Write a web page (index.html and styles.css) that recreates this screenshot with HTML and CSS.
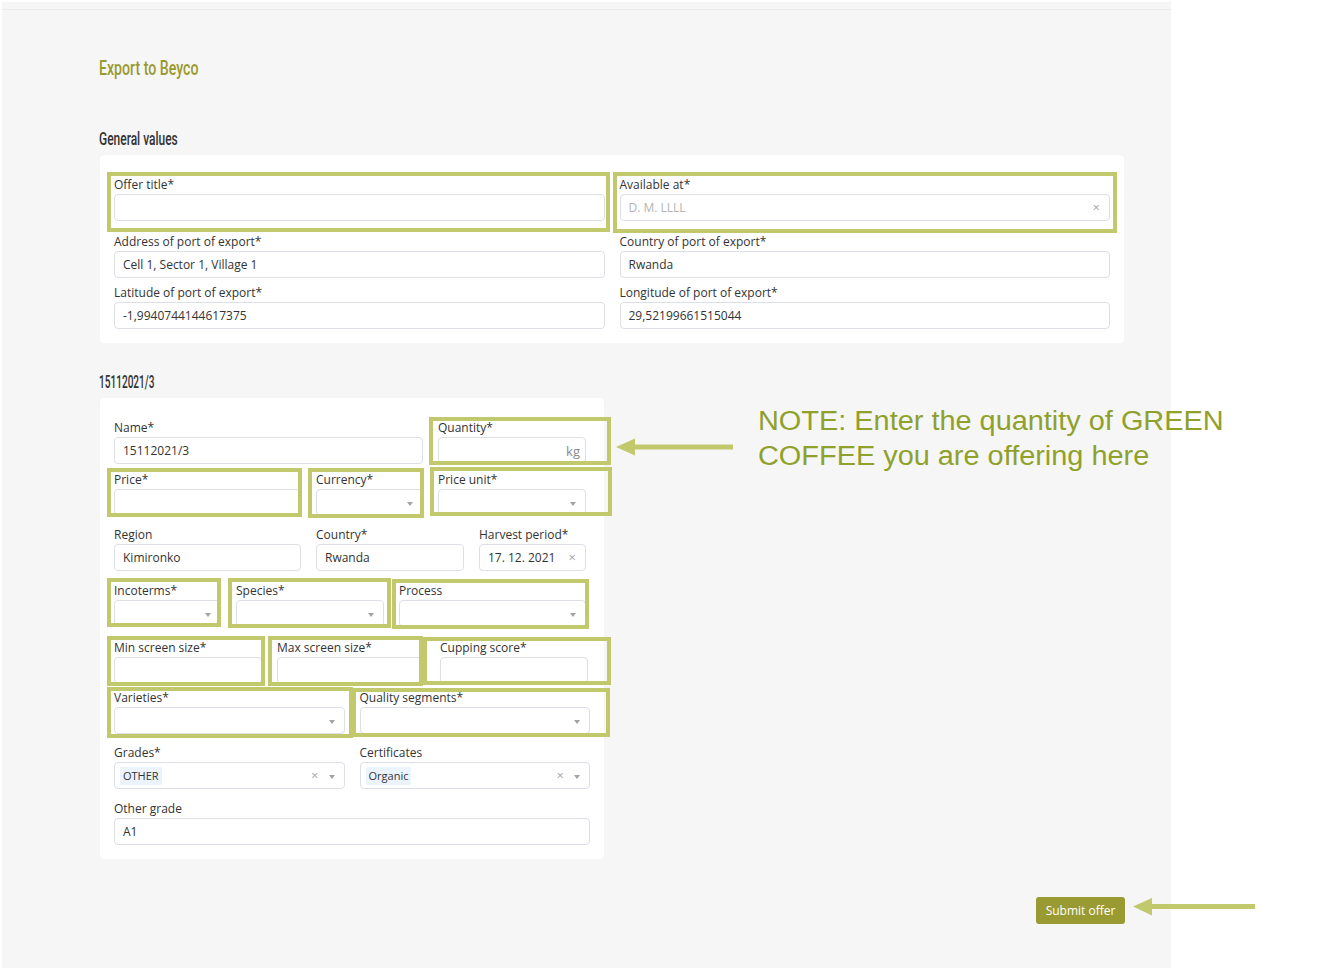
FILE: index.html
```html
<!DOCTYPE html>
<html lang="en">
<head>
<meta charset="utf-8">
<title>Export to Beyco</title>
<link rel="stylesheet" href="styles.css">
</head>
<body>
<div class="app">
  <div class="topbar"></div>
  <main class="content">
    <h1 class="page-title"><span class="condensed">Export to Beyco</span></h1>
    <h2 class="section-title"><span class="condensed">General values</span></h2>
    <section class="card card-general">
      <div class="row cols-2 mb-11">
        <div class="field"><label>Offer title*</label><div class="input"></div></div>
        <div class="field"><label>Available at*</label><div class="input"><span class="placeholder">D. M. LLLL</span><span class="clear">×</span></div></div>
      </div>
      <div class="row cols-2 mb-5">
        <div class="field"><label>Address of port of export*</label><div class="input">Cell 1, Sector 1, Village 1</div></div>
        <div class="field"><label>Country of port of export*</label><div class="input">Rwanda</div></div>
      </div>
      <div class="row cols-2">
        <div class="field"><label>Latitude of port of export*</label><div class="input">-1,9940744144617375</div></div>
        <div class="field"><label>Longitude of port of export*</label><div class="input">29,52199661515044</div></div>
      </div>
    </section>

    <h2 class="section-title lot"><span class="condensed digits">15112021/3</span></h2>
    <section class="card card-lot">
      <div class="row cols-name mb-6">
        <div class="field"><label>Name*</label><div class="input">15112021/3</div></div>
        <div class="field"><label>Quantity*</label><div class="input"><span class="suffix">kg</span></div></div>
      </div>
      <div class="row cols-price mb-9">
        <div class="field"><label>Price*</label><div class="input"></div></div>
        <div class="field"><label>Currency*</label><div class="input"><span class="caret"></span></div></div>
        <div class="field"><label>Price unit*</label><div class="input"><span class="caret"></span></div></div>
      </div>
      <div class="row cols-region mb-10">
        <div class="field"><label>Region</label><div class="input">Kimironko</div></div>
        <div class="field"><label>Country*</label><div class="input">Rwanda</div></div>
        <div class="field"><label>Harvest period*</label><div class="input">17. 12. 2021<span class="clear">×</span></div></div>
      </div>
      <div class="row cols-inco mb-11">
        <div class="field"><label>Incoterms*</label><div class="input"><span class="caret"></span></div></div>
        <div class="field"><label>Species*</label><div class="input"><span class="caret"></span></div></div>
        <div class="field"><label>Process</label><div class="input"><span class="caret"></span></div></div>
      </div>
      <div class="row cols-screen mb-4">
        <div class="field"><label>Min screen size*</label><div class="input"></div></div>
        <div class="field"><label>Max screen size*</label><div class="input"></div></div>
        <div class="field"><label>Cupping score*</label><div class="input"></div></div>
      </div>
      <div class="row cols-2 mb-9">
        <div class="field"><label>Varieties*</label><div class="input"><span class="caret"></span></div></div>
        <div class="field"><label>Quality segments*</label><div class="input"><span class="caret"></span></div></div>
      </div>
      <div class="row cols-2 mb-10">
        <div class="field"><label>Grades*</label><div class="input multi"><span class="tag">OTHER</span><span class="clear">×</span><span class="caret caret-near"></span></div></div>
        <div class="field"><label>Certificates</label><div class="input multi"><span class="tag">Organic</span><span class="clear">×</span><span class="caret caret-near"></span></div></div>
      </div>
      <div class="row cols-1">
        <div class="field"><label>Other grade</label><div class="input">A1</div></div>
      </div>
    </section>

    <div class="actions"><button class="btn-submit" type="button">Submit offer</button></div>
  </main>
</div>

<div class="annotations">
  <div class="hl hl-offer"></div>
  <div class="hl hl-available"></div>
  <div class="hl hl-quantity"></div>
  <div class="hl hl-price"></div>
  <div class="hl hl-currency"></div>
  <div class="hl hl-priceunit"></div>
  <div class="hl hl-incoterms"></div>
  <div class="hl hl-species"></div>
  <div class="hl hl-process"></div>
  <div class="hl hl-min"></div>
  <div class="hl hl-max"></div>
  <div class="hl hl-cupping"></div>
  <div class="hl hl-varieties"></div>
  <div class="hl hl-quality"></div>

  <p class="note">NOTE: Enter the quantity of GREEN<br>COFFEE you are offering here</p>

  <svg class="arrow arrow-note" width="122" height="20" viewBox="0 0 122 20">
    <polygon points="2,10 21,1.5 21,18.5" fill="#c2c86c"/>
    <rect x="20" y="7.5" width="99" height="5" fill="#c2c86c"/>
  </svg>
  <svg class="arrow arrow-submit" width="126" height="20" viewBox="0 0 126 20">
    <polygon points="2,9.5 21,1 21,18.5" fill="#c2c86c"/>
    <rect x="20" y="7" width="104" height="5" fill="#c2c86c"/>
  </svg>
</div>
</body>
</html>
```

FILE: styles.css
```css
* { box-sizing: border-box; }

html, body { margin: 0; padding: 0; }

body {
  position: relative;
  width: 1325px;
  height: 968px;
  overflow: hidden;
  background: #ffffff;
  font-family: "Open Sans", "Liberation Sans", sans-serif;
  color: #333333;
}

.app {
  margin: 2px 0 0 2px;
  width: 1169px;
  height: 966px;
  background: #f6f6f6;
}

.topbar {
  height: 8px;
  border-bottom: 1px solid #ebebeb;
}

.content {
  padding: 46px 0 0 97px;
}

.condensed {
  display: inline-block;
  transform-origin: 0 50%;
  white-space: nowrap;
}

.page-title {
  margin: 0;
  font-family: Roboto, "Liberation Sans", sans-serif;
  font-weight: 500;
  font-size: 20.5px;
  line-height: 24px;
  color: #9a9a2e;
}

.page-title .condensed { transform: scaleX(0.69); }

.section-title {
  margin: 48px 0 5px;
  font-family: Roboto, "Liberation Sans", sans-serif;
  font-weight: 500;
  font-size: 19px;
  line-height: 22px;
  color: #333333;
}

.section-title .condensed { transform: scaleX(0.63); }

.section-title.lot {
  margin: 28px 0 5px;
  font-size: 18px;
}

.section-title .condensed.digits { transform: scaleX(0.56); }

.card {
  background: #ffffff;
  border-radius: 4px;
  padding: 20px 14px 14px;
  box-shadow: 0 0 1px rgba(0, 0, 0, 0.05);
}

.card-general { width: 1024px; margin-left: 1px; }
.card-lot { width: 504px; margin-left: 1px; }

.row {
  display: grid;
  column-gap: 15px;
}

.cols-1 { grid-template-columns: 1fr; }
.cols-2 { grid-template-columns: 1fr 1fr; }
.cols-name { grid-template-columns: 309px 148px; }
.cols-price { grid-template-columns: 187px 107px 148px; }
.cols-region { grid-template-columns: 187px 148px 107px; }
.cols-inco { grid-template-columns: 107px 148px 187px; }
.cols-screen { grid-template-columns: 148px 148px 148px; }

.mb-4 { margin-bottom: 4px; }
.mb-5 { margin-bottom: 5px; }
.mb-6 { margin-bottom: 6px; }
.mb-9 { margin-bottom: 9px; }
.mb-10 { margin-bottom: 10px; }
.mb-11 { margin-bottom: 11px; }

.field label {
  display: block;
  font-size: 12px;
  line-height: 19px;
  color: #333333;
  white-space: nowrap;
}

.input {
  display: flex;
  align-items: center;
  height: 27px;
  padding: 0 9px 0 8px;
  border: 1px solid #dcdfe6;
  border-radius: 4px;
  background: #ffffff;
  font-size: 12px;
  color: #333333;
  white-space: nowrap;
}

.input.multi {
  padding-left: 5px;
}

.placeholder { color: #b4b4b4; }

.clear {
  margin-left: auto;
  color: #a6a6a6;
  font-size: 13px;
  line-height: 1;
}

.suffix {
  margin-left: auto;
  margin-right: -4px;
  color: #8a8a8a;
  font-size: 13px;
}

.caret {
  margin-left: auto;
  width: 0;
  height: 0;
  border-left: 3.5px solid transparent;
  border-right: 3.5px solid transparent;
  border-top: 4px solid #a3a3a3;
  margin-top: 2px;
}

.clear + .caret-near {
  margin-left: 10px;
}

.tag {
  display: inline-block;
  height: 18px;
  line-height: 18px;
  padding: 0 3px;
  background: #ebf4fd;
  border-radius: 2px;
  font-size: 11px;
  color: #333333;
}

.actions {
  width: 1026px;
  display: flex;
  justify-content: flex-end;
  margin-top: 38px;
}

.btn-submit {
  width: 89px;
  height: 27px;
  padding: 0;
  border: 0;
  border-radius: 3px;
  background: #9a9a33;
  color: #ffffff;
  font-family: "Open Sans", "Liberation Sans", sans-serif;
  font-size: 12px;
}

/* annotation layer drawn over the screenshot */
.annotations {
  position: absolute;
  left: 0;
  top: 0;
  width: 0;
  height: 0;
}

.hl {
  position: absolute;
  border: 4px solid #c2c86c;
}

.hl-offer     { left: 107px; top: 172px; width: 503px; height: 60px; }
.hl-available { left: 613px; top: 172px; width: 504px; height: 61px; }
.hl-quantity  { left: 429px; top: 417px; width: 182px; height: 48px; }
.hl-price     { left: 107px; top: 468px; width: 195px; height: 49px; }
.hl-currency  { left: 308px; top: 468px; width: 116px; height: 50px; }
.hl-priceunit { left: 430px; top: 467px; width: 182px; height: 49px; }
.hl-incoterms { left: 107px; top: 578px; width: 114px; height: 49px; }
.hl-species   { left: 228px; top: 578px; width: 163px; height: 50px; }
.hl-process   { left: 392px; top: 579px; width: 197px; height: 50px; }
.hl-min       { left: 107px; top: 636px; width: 158px; height: 50px; }
.hl-max       { left: 268px; top: 636px; width: 155px; height: 50px; }
.hl-cupping   { left: 423px; top: 637px; width: 188px; height: 48px; }
.hl-varieties { left: 107px; top: 687px; width: 246px; height: 51px; }
.hl-quality   { left: 352px; top: 688px; width: 258px; height: 49px; }

.note {
  position: absolute;
  left: 758px;
  top: 404px;
  margin: 0;
  white-space: nowrap;
  font-family: "Liberation Sans", Arial, sans-serif;
  font-size: 27px;
  line-height: 35px;
  color: #8fa12a;
  transform: scaleX(1.07);
  transform-origin: 0 0;
}

.arrow { position: absolute; display: block; }
.arrow-note { left: 614px; top: 437px; }
.arrow-submit { left: 1131px; top: 897px; }
```
